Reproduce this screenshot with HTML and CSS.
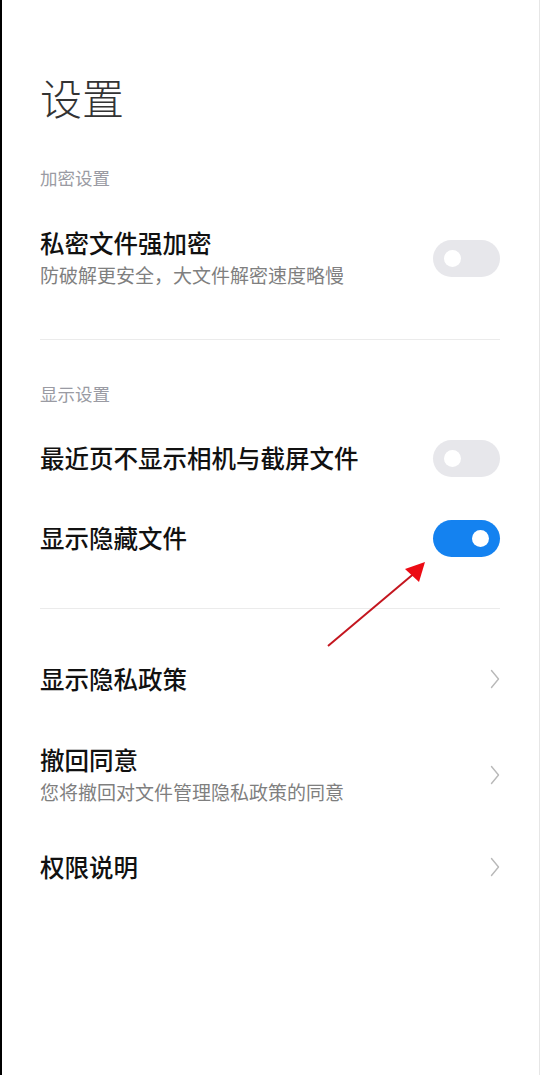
FILE: index.html
```html
<!DOCTYPE html>
<html lang="zh-CN">
<head>
<meta charset="utf-8">
<title>设置</title>
<link rel="stylesheet" href="styles.css">
</head>
<body>
<div class="page">
  <h1 class="title">设置</h1>

  <section class="group">
    <div class="group-label">加密设置</div>
    <div class="row two-line">
      <div class="row-text">
        <div class="row-title">私密文件强加密</div>
        <div class="row-sub">防破解更安全，大文件解密速度略慢</div>
      </div>
      <span class="switch"><span class="knob"></span></span>
    </div>
  </section>

  <section class="group">
    <div class="group-label">显示设置</div>
    <div class="row">
      <div class="row-text">
        <div class="row-title">最近页不显示相机与截屏文件</div>
      </div>
      <span class="switch"><span class="knob"></span></span>
    </div>
    <div class="row">
      <div class="row-text">
        <div class="row-title">显示隐藏文件</div>
      </div>
      <span class="switch on"><span class="knob"></span></span>
    </div>
  </section>

  <section class="group links">
    <div class="row">
      <div class="row-text">
        <div class="row-title">显示隐私政策</div>
      </div>
      <svg class="chevron" viewBox="0 0 10 20" width="10" height="20"><polyline points="1.5,1.5 8.5,10 1.5,18.5"/></svg>
    </div>
    <div class="row two-line">
      <div class="row-text">
        <div class="row-title">撤回同意</div>
        <div class="row-sub">您将撤回对文件管理隐私政策的同意</div>
      </div>
      <svg class="chevron" viewBox="0 0 10 20" width="10" height="20"><polyline points="1.5,1.5 8.5,10 1.5,18.5"/></svg>
    </div>
    <div class="row">
      <div class="row-text">
        <div class="row-title">权限说明</div>
      </div>
      <svg class="chevron" viewBox="0 0 10 20" width="10" height="20"><polyline points="1.5,1.5 8.5,10 1.5,18.5"/></svg>
    </div>
  </section>
</div>

<svg class="annotation" viewBox="0 0 540 1075" width="540" height="1075">
  <line x1="328" y1="646" x2="417" y2="571" class="arrow-line"/>
  <polygon points="425,562 405,569 419,582" class="arrow-head"/>
</svg>
</body>
</html>
```

FILE: styles.css
```css
html, body {
  margin: 0;
  padding: 0;
}

body {
  position: relative;
  width: 540px;
  height: 1075px;
  overflow: hidden;
  background: #ffffff;
  font-family: "Noto Sans CJK SC", "Noto Sans", sans-serif;
}

.page {
  box-sizing: border-box;
  height: 1075px;
  border-left: 2px solid #000000;
  border-right: 1px solid #e6e6e6;
  padding: 76px 39px 0 38px;
}

.title {
  margin: 0 0 6px;
  font-size: 42px;
  line-height: 42px;
  font-weight: 300;
  color: #333333;
}

.group {
  padding: 42px 0 29px;
}

.group + .group {
  border-top: 1px solid #ebebeb;
}

.group + .group:not(.links) {
  padding-bottom: 30px;
}

.group.links {
  padding-top: 30px;
}

.group-label {
  font-size: 17.5px;
  line-height: 24px;
  color: #9a9ba3;
  margin-bottom: 12px;
}

.row {
  display: flex;
  align-items: center;
  justify-content: space-between;
  padding: 25px 0;
}

.row.two-line {
  padding: 26px 0 22px;
}

.row-title {
  font-size: 24.5px;
  line-height: 30px;
  font-weight: 500;
  color: #111111;
}

.row-sub {
  margin-top: 4px;
  font-size: 19px;
  line-height: 26px;
  color: #7f7f7f;
}

.switch {
  box-sizing: border-box;
  flex: none;
  display: flex;
  align-items: center;
  width: 67px;
  height: 37px;
  margin: -4px 0;
  padding: 0 11px;
  border-radius: 19px;
  background: #e7e7eb;
}

.switch.on {
  justify-content: flex-end;
  background: #1482f0;
}

.knob {
  width: 17px;
  height: 17px;
  border-radius: 50%;
  background: #ffffff;
}

.chevron {
  flex: none;
  fill: none;
  stroke: #b9b9b9;
  stroke-width: 1.4;
  stroke-linecap: round;
  stroke-linejoin: round;
}

.annotation {
  position: absolute;
  left: 0;
  top: 0;
  pointer-events: none;
}

.arrow-line {
  stroke: #c4161f;
  stroke-width: 2;
}

.arrow-head {
  fill: #ec0b14;
}
```
